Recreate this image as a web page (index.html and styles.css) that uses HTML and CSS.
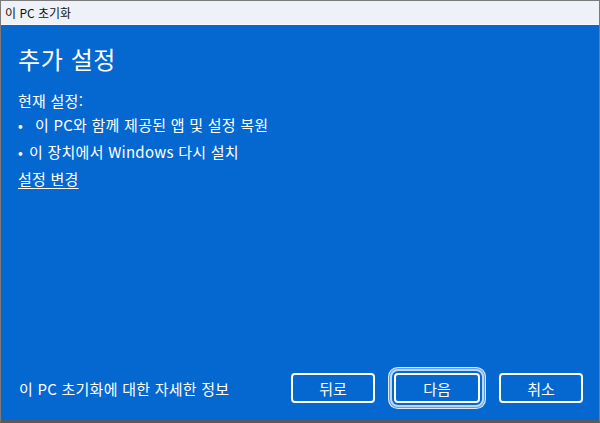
FILE: index.html
```html
<!DOCTYPE html>
<html lang="ko">
<head>
<meta charset="utf-8">
<link rel="stylesheet" href="styles.css">
</head>
<body>
<div class="window">
  <div class="titlebar">이 PC 초기화</div>
  <div class="content">
    <div class="main">
      <h1 class="heading">추가 설정</h1>
      <p class="label">현재 설정:</p>
      <ul class="list">
        <li class="item item-wide"><span class="dot">•</span><span>이 PC와 함께 제공된 앱 및 설정 복원</span></li>
        <li class="item"><span class="dot">•</span><span>이 장치에서 Windows 다시 설치</span></li>
      </ul>
      <a class="link" href="#">설정 변경</a>
    </div>
    <div class="footer">
      <a class="info" href="#">이 PC 초기화에 대한 자세한 정보</a>
      <div class="buttons">
        <button class="btn">뒤로</button>
        <button class="btn btn-focus">다음</button>
        <button class="btn">취소</button>
      </div>
    </div>
  </div>
</div>
</body>
</html>
```
FILE: styles.css
```css
html, body {
  margin: 0;
  padding: 0;
  width: 600px;
  height: 423px;
  overflow: hidden;
}
body {
  font-family: "Noto Sans CJK KR", "Noto Sans", sans-serif;
}
.window {
  box-sizing: border-box;
  width: 600px;
  height: 423px;
  border: 1px solid #7a7a7a;
  border-bottom: 3px solid #555a60;
  display: flex;
  flex-direction: column;
  background: #0568d0;
}
.titlebar {
  height: 23px;
  flex: none;
  background: #eef1f8;
  border-bottom: 1px solid #f8f9fc;
  color: #111;
  font-size: 12px;
  line-height: 23px;
  padding-left: 4px;
}
.content {
  flex: 1;
  display: flex;
  flex-direction: column;
  justify-content: space-between;
  padding: 0 16px 0 17px;
  color: #fff;
  letter-spacing: 0.25px;
}
.main {
  display: flex;
  flex-direction: column;
  align-items: flex-start;
}
.heading {
  margin: 17px 0 0 0;
  font-size: 24px;
  font-weight: 400;
  line-height: 34px;
  letter-spacing: 0.6px;
}
.label {
  margin: 15px 0 0 0;
  font-size: 15px;
  line-height: 20px;
}
.list {
  list-style: none;
  margin: 4px 0 0 0;
  padding: 0;
}
.item {
  font-size: 15px;
  line-height: 20px;
  display: flex;
  margin-bottom: 7px;
}
.dot {
  width: 11px;
  flex: none;
  font-size: 14px;
}
.item-wide .dot {
  width: 17px;
}
.link {
  margin-top: 0px;
  font-size: 15px;
  line-height: 20px;
  color: #fff;
  text-decoration: underline;
  text-underline-offset: 3px;
}
.footer {
  display: flex;
  align-items: center;
  justify-content: space-between;
  padding-bottom: 17px;
}
.info {
  color: #fff;
  text-decoration: none;
  font-size: 15px;
  padding-left: 1px;
}
.buttons {
  display: flex;
  gap: 19px;
}
.btn {
  box-sizing: border-box;
  width: 84px;
  height: 30px;
  border: 2px solid #fff;
  border-radius: 4px;
  background: #0568d0;
  color: #fff;
  font-family: "Noto Sans CJK KR", "Noto Sans", sans-serif;
  font-size: 15px;
  padding: 0;
}
.btn-focus {
  width: 86px;
  box-shadow: 0 0 0 2px #0568d0, 0 0 0 4px #bcd8f6, 0 0 0 5px #5d9fe6, 0 0 0 6px #dce9fa;
  border-radius: 4px;
}
```
